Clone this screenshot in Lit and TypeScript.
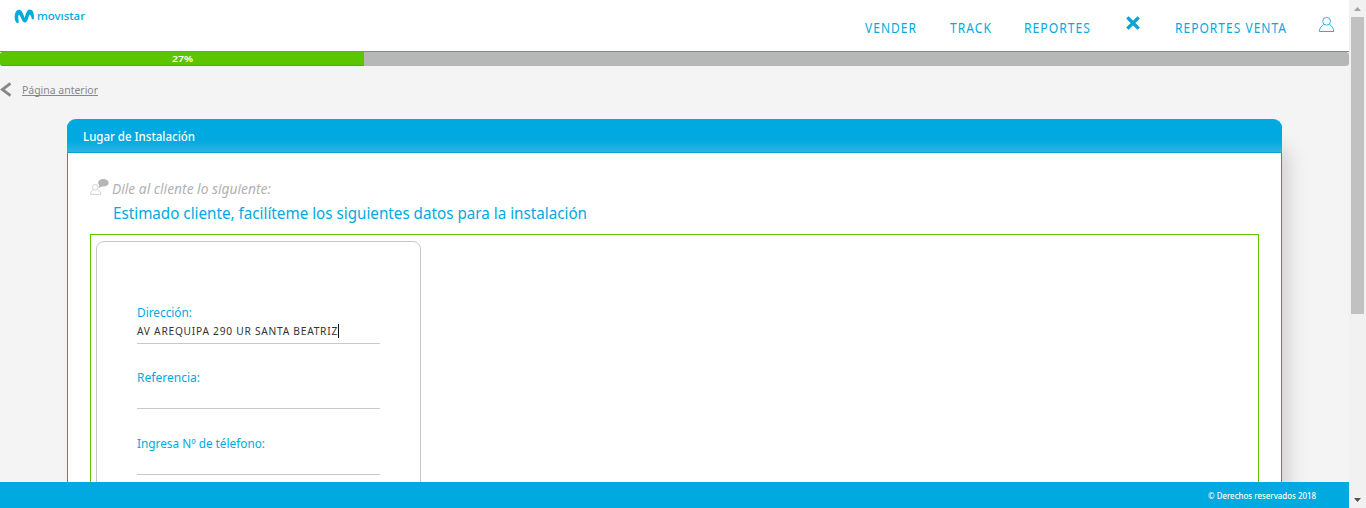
import { LitElement, html, css, svg } from "lit";
import { customElement, property } from "lit/decorators.js";

/** One line of condensed text, fitted to a fixed advance width. */
@customElement("fit-text")
class FitText extends LitElement {
  @property() text = "";
  @property({ type: Number }) width = 50;
  static styles = css`
    :host { display: block; flex: none; height: 20px; }
    svg { display: block; height: 20px; overflow: visible; }
    text { fill: currentColor; }
  `;
  render() {
    return html`<svg width=${this.width}>
      ${svg`<text x="0" y="15" textLength=${this.width} lengthAdjust="spacingAndGlyphs">${this.text}</text>`}
    </svg>`;
  }
}

@customElement("app-root")
class AppRoot extends LitElement {
  static styles = css`
    * { box-sizing: border-box; }
    :host {
      display: flex; width: 1366px; height: 508px; overflow: hidden;
      background: #f4f4f4; color: #00a9e0;
      font-family: "Noto Sans", "Open Sans", sans-serif;
    }
    .page { width: 1349px; height: 508px; display: flex; flex-direction: column; overflow: hidden; }
    header { height: 52px; flex: none; background: #fff; border-bottom: 1px solid #868686; display: flex; align-items: flex-start; }
    .logo { display: flex; padding: 9px 0 0 14px; gap: 2px; }
    .brand { font-weight: 500; font-size: 11.5px; margin-top: -4px; }
    nav { margin-left: auto; display: flex; align-items: flex-start; padding: 18px 14px 0 0; font-size: 14px; letter-spacing: 1.2px; }
    .vender { margin-right: 33px; }
    .track { margin-right: 32px; }
    .reportes { margin-right: 34px; }
    .close { margin: -3px 34px 0 0; }
    .venta { margin-right: 31px; }
    .user { margin-top: -2px; }
    svg { display: block; flex: none; }
    .progress { height: 14px; flex: none; background: #b6b8b7; border-radius: 3px; overflow: hidden; }
    .bar { height: 14px; background: #5bc500; border-bottom: 1px solid #4fae00; display: flex; justify-content: center; color: #fff; font-size: 9.5px; font-weight: 600; }
    .bar fit-text { margin-top: -5px; }
    .back { height: 53px; flex: none; display: flex; align-items: flex-start; padding: 13px 0 0 0; color: #86888c; font-size: 11.5px; gap: 10px; }
    .link { height: 17px; border-bottom: 1px solid #86888c; }
    .back svg { margin-top: 3px; }
    .card { margin: 0 67px; flex: 1; min-height: 0; display: flex; flex-direction: column; border: 1px solid #0a9fd5; border-top: 0; border-bottom: 0; border-radius: 9px 9px 0 0; background: #fff; box-shadow: 10px 25px 20px -5px rgba(0,0,0,.17); }
    .title { height: 34px; flex: none; margin: 0 -1px; padding: 7px 0 0 16px; border-radius: 9px 9px 0 0; color: #fff; font-size: 13px; font-weight: 500; background: linear-gradient(#00a9e0 0 65%, #2db3e3); border-bottom: 1px solid #0a9fd5; }
    .content { flex: 1; min-height: 0; padding: 26px 22px 0; display: flex; flex-direction: column; }
    .say { display: flex; gap: 3px; height: 24px; color: #b2b2b2; font-size: 15px; font-style: italic; }
    .hint { padding-left: 22.5px; height: 31px; font-size: 17px; }
    .hint fit-text { margin-top: 1px; }
    .area { flex: 1; min-height: 0; border: 1px solid #5bc500; border-bottom: 0; padding: 6px 0 0 5px; overflow: hidden; }
    .form { width: 325px; height: 300px; border: 1px solid #c8c8c8; border-radius: 8px; padding: 60px 40px 0; }
    .field { height: 65.4px; font-size: 13px; }
    .input { height: 22px; width: 243px; border-bottom: 1px solid #c8c8c8; display: flex; color: #333; font-size: 11px; letter-spacing: .8px; }
    .input fit-text { margin-top: -2px; }
    .caret { width: 1px; height: 14px; margin-top: 2px; background: #111; }
    footer { height: 26px; flex: none; position: relative; background: #00a9e0; color: #fff; display: flex; justify-content: flex-end; padding: 2px 33px 0 0; font-size: 9px; font-weight: 500; }
    .scroll { width: 17px; background: #f1f1f1; display: flex; flex-direction: column; align-items: center; padding: 7px 0 6px; }
    .thumb { width: 13px; height: 297px; background: #c1c1c1; margin: 6px 0 auto; }
  `;

  field(label: string, width: number, value = "") {
    return html`<div class="field">
      <fit-text text=${label} width=${width}></fit-text>
      <div class="input">${value ? html`<fit-text text=${value} width="201"></fit-text><i class="caret"></i>` : ""}</div>
    </div>`;
  }

  render() {
    return html`
      <div class="page">
        <header>
          <div class="logo">
            <svg width="21" height="15" viewBox="0 0 21 15">
              <path d="M3 14C1 12.500 .5 9.500 .7 7C1 3.500 2.500 .8 5.100 .8C8 .8 8.900 4.500 10.700 9C12 4.500 13 .6 15.700 .6C19.200 .6 20.400 5.500 19.900 9.500C19.800 10.800 18.200 10.900 17.700 9.600C17.200 8 16.900 5.700 15.900 5.700C14.500 5.700 13.800 13.600 10.900 13.600C8 13.600 6.500 6 5.100 6C3.800 6 4.300 9.500 4.700 12C4.900 13.500 4.200 14.500 3 14z" fill="#00a9e0"/>
            </svg>
            <fit-text class="brand" text="movıstar" width="48"></fit-text>
          </div>
          <nav>
            <fit-text class="vender" text="VENDER" width="52"></fit-text>
            <fit-text class="track" text="TRACK" width="42"></fit-text>
            <fit-text class="reportes" text="REPORTES" width="67"></fit-text>
            <svg class="close" width="16" height="16" viewBox="0 0 16 16"><path d="M3.500 3.500l9 9M12.500 3.500l-9 9" stroke="#0aa3d4" stroke-width="3.3" stroke-linecap="square"/></svg>
            <fit-text class="venta" text="REPORTES VENTA" width="112"></fit-text>
            <svg class="user" width="17" height="17" viewBox="0 0 17 17" fill="none" stroke="#2cb1de"><circle cx="8.6" cy="5.3" r="3.9"/><path d="M5.5 8.5C3.5 10 1.5 12 1.3 15.5h14.5C15.6 12 13.7 10 11.7 8.5"/></svg>
          </nav>
        </header>
        <div class="progress"><div class="bar" style="width:27%"><fit-text text="27%" width="21"></fit-text></div></div>
        <div class="back">
          <svg width="12" height="15" viewBox="0 0 12 15"><path d="M10.5 1.3L2.3 7.5l8.2 6.2" fill="none" stroke="#86888c" stroke-width="2.9"/></svg>
          <fit-text class="link" text="Página anterior" width="76"></fit-text>
        </div>
        <section class="card">
          <div class="title"><fit-text text="Lugar de Instalación" width="112"></fit-text></div>
          <div class="content">
            <div class="say">
              <svg width="19" height="17" viewBox="0 0 19 17"><g fill="none" stroke="#d2d2d2"><circle cx="5.3" cy="8.2" r="2.8"/><path d="M3.4 10.5C1.5 11.5.6 13 .5 15.4h10.2c-.1-2.4-1.3-3.9-3.3-4.9"/></g><ellipse cx="13.4" cy="3.8" rx="5.3" ry="3.7" fill="#b5b5b5"/><path d="M9.3 5L9 9l4-2z" fill="#b5b5b5"/></svg>
              <fit-text text="Dile al cliente lo siguiente:" width="159"></fit-text>
            </div>
            <div class="hint"><fit-text text="Estimado cliente, facilíteme los siguientes datos para la instalación" width="474"></fit-text></div>
            <div class="area">
              <div class="form">
                ${this.field("Dirección:", 55, "AV AREQUIPA 290 UR SANTA BEATRIZ")}
                ${this.field("Referencia:", 63)}
                ${this.field("Ingresa Nº de télefono:", 128)}
              </div>
            </div>
          </div>
        </section>
        <footer><fit-text text="© Derechos reservados 2018" width="108"></fit-text></footer>
      </div>
      <div class="scroll">
        <svg width="7" height="4" viewBox="0 0 7 4"><path d="M0 4L3.5 0 7 4z" fill="#a3a3a3"/></svg>
        <div class="thumb"></div>
        <svg width="7" height="4" viewBox="0 0 7 4"><path d="M0 0h7L3.5 4z" fill="#505050"/></svg>
      </div>`;
  }
}
